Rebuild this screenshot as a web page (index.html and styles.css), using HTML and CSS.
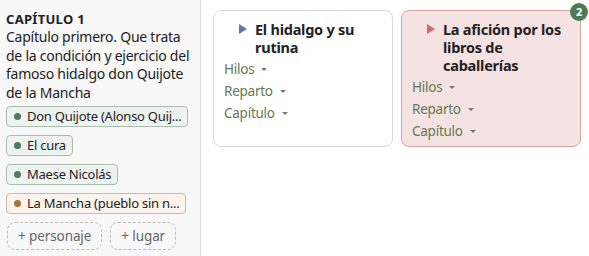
FILE: index.html
```html
<!DOCTYPE html>
<html lang="es">
<head>
  <meta charset="UTF-8" />
  <title>Capítulo 1</title>
  <link rel="stylesheet" href="styles.css">
</head>
<body>
  <div class="layout">
    <aside class="sidebar">
      <h3>CAPÍTULO 1</h3>
      <p class="summary">Capítulo primero. Que trata de la condición y ejercicio del famoso hidalgo don Quijote de la Mancha</p>
      <div class="chips">
        <div class="chip"><span class="dot"></span><span class="label">Don Quijote (Alonso Quij...</span></div>
        <div class="chip"><span class="dot"></span><span class="label">El cura</span></div>
        <div class="chip"><span class="dot"></span><span class="label">Maese Nicolás</span></div>
        <div class="chip place"><span class="dot"></span><span class="label">La Mancha (pueblo sin n...</span></div>
      </div>
      <div class="add-row">
        <button class="add-btn">+ personaje</button>
        <button class="add-btn">+ lugar</button>
      </div>
    </aside>

    <main class="scenes">
      <div class="scene">
        <div class="scene-title"><span class="tri"></span><span>El hidalgo y su rutina</span></div>
        <div class="menu">Hilos <span class="caret"></span></div>
        <div class="menu">Reparto <span class="caret"></span></div>
        <div class="menu">Capítulo <span class="caret"></span></div>
      </div>
      <div class="scene flagged">
        <span class="badge">2</span>
        <div class="scene-title"><span class="tri"></span><span>La afición por los libros de caballerías</span></div>
        <div class="menu">Hilos <span class="caret"></span></div>
        <div class="menu">Reparto <span class="caret"></span></div>
        <div class="menu">Capítulo <span class="caret"></span></div>
      </div>
    </main>
  </div>
</body>
</html>
```

FILE: styles.css
```css
body {
  margin: 0;
  font-family: "Noto Sans", "Open Sans", sans-serif;
  color: #222;
  background: #fff;
  letter-spacing: -0.25px;
}
.layout {
  display: flex;
  height: 256px;
}
.sidebar {
  width: 188px;
  padding: 10px 6px;
  background: #f8f8f8;
  border-right: 1px solid #ddd;
  flex-shrink: 0;
}
.sidebar h3 {
  margin: 0;
  font-size: 13px;
  font-weight: 700;
  letter-spacing: 0.3px;
  line-height: 18px;
}
.summary {
  margin: 0 0 3px;
  font-size: 14px;
  line-height: 18.7px;
}
.chips {
  display: flex;
  flex-direction: column;
  align-items: flex-start;
  gap: 8px;
}
.chip {
  display: flex;
  align-items: center;
  gap: 6px;
  height: 19px;
  padding: 0 6px 0 7px;
  border: 1px solid #a9bdb0;
  border-radius: 4px;
  background: #eff3f0;
  font-size: 13px;
  white-space: nowrap;
}
.dot {
  width: 7px;
  height: 7px;
  border-radius: 50%;
  background: #4e7a62;
  flex-shrink: 0;
}
.chip.place {
  border-color: #d6b89e;
  background: #fbf3ec;
}
.chip.place .dot {
  background: #b07040;
}
.add-row {
  display: flex;
  gap: 8px;
  margin-top: 8px;
  margin-left: 1px;
}
.add-btn {
  font-family: inherit;
  font-size: 13.5px;
  letter-spacing: -0.1px;
  color: #666;
  background: transparent;
  border: 1px dashed #bbb;
  border-radius: 8px;
  height: 28px;
  padding: 0 10px;
}
.scenes {
  display: flex;
  align-items: flex-start;
  gap: 8px;
  padding: 10px 12px;
}
.scene {
  position: relative;
  width: 180px;
  height: 137px;
  border: 1px solid #d8d8d8;
  border-radius: 8px;
  background: #fff;
  padding: 0 10px;
  box-sizing: border-box;
}
.scene.flagged {
  background: #f5e2e2;
  border-color: #d9a4a4;
}
.scene-title {
  display: flex;
  gap: 8px;
  padding: 9px 6px 0 15px;
  font-size: 14.5px;
  font-weight: 700;
  line-height: 18px;
  margin-bottom: 2px;
}
.tri {
  flex-shrink: 0;
  width: 0;
  height: 0;
  margin-top: 4px;
  border-top: 5px solid transparent;
  border-bottom: 5px solid transparent;
  border-left: 8px solid #5b7aa6;
}
.flagged .tri {
  border-left-color: #d46a6a;
}
.menu {
  display: flex;
  align-items: center;
  gap: 7px;
  height: 22px;
  font-size: 13.5px;
  color: #637a52;
}
.caret {
  width: 0;
  height: 0;
  border-left: 3px solid transparent;
  border-right: 3px solid transparent;
  border-top: 3px solid #777;
}
.badge {
  position: absolute;
  top: -8px;
  right: -8px;
  width: 18px;
  height: 18px;
  border-radius: 50%;
  background: #4f7a5a;
  color: #fff;
  font-size: 11px;
  font-weight: 700;
  line-height: 18px;
  text-align: center;
}
```
